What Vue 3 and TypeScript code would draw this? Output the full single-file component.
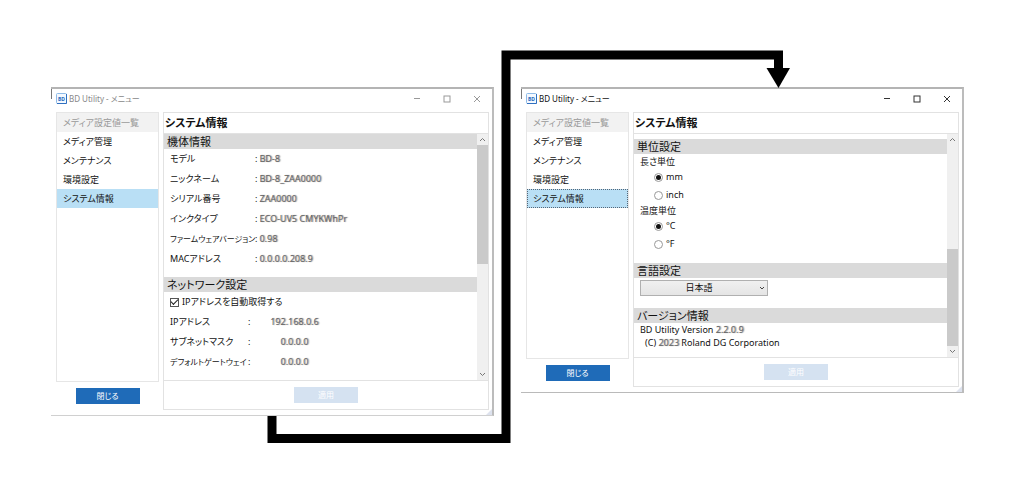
<script setup lang="ts">
import { ref } from 'vue'

interface Row {
  label: string
  value: string
}

interface Panel {
  id: string
  active: boolean
  track: { before: number; thumb: number; after: number }
}

const menu: string[] = ['メディア設定値一覧', 'メディア管理', 'メンテナンス', '環境設定', 'システム情報']

const panels: Panel[] = [
  { id: 'device', active: false, track: { before: 0, thumb: 120, after: 106 } },
  { id: 'units', active: true, track: { before: 106, thumb: 98, after: 0 } },
]

const device: Row[] = [
  { label: 'モデル', value: 'BD-8' },
  { label: 'ニックネーム', value: 'BD-8_ZAA0000' },
  { label: 'シリアル番号', value: 'ZAA0000' },
  { label: 'インクタイプ', value: 'ECO-UV5 CMYKWhPr' },
  { label: 'ファームウェアバージョン', value: '0.98' },
  { label: 'MACアドレス', value: '0.0.0.0.208.9' },
]

const network: Row[] = [
  { label: 'IPアドレス', value: '192.168.0.6' },
  { label: 'サブネットマスク', value: '0.0.0.0' },
  { label: 'デフォルトゲートウェイ', value: '0.0.0.0' },
]

const isLong = (text: string): boolean => text.length > 10

const autoIp = ref(true)
const lengthUnit = ref('mm')
const tempUnit = ref('°C')
const language = ref('ja')
</script>

<template>
  <main class="canvas">
    <section v-for="p in panels" :key="p.id" class="window" :class="{ inactive: !p.active }">
      <header class="titlebar">
        <svg class="logo" viewBox="0 0 11 11" aria-hidden="true">
          <rect x="0.5" y="0.5" width="10" height="10" rx="1" fill="#f4f9ff" stroke="#8dbbe8" />
          <path d="M10.5 1v9.5H1" fill="none" stroke="#2f6fc0" />
          <text x="5.5" y="7.500" text-anchor="middle">BD</text>
        </svg>
        <span class="title">BD Utility - メニュー</span>
        <div class="controls">
          <button type="button" aria-label="最小化">
            <svg viewBox="0 0 8 8"><path d="M1 3.500h6" /></svg>
          </button>
          <button type="button" aria-label="最大化">
            <svg viewBox="0 0 8 8"><rect x="1" y="1" width="6" height="6" /></svg>
          </button>
          <button type="button" aria-label="ウィンドウを閉じる">
            <svg viewBox="0 0 8 8"><path d="M1 1l6 6M7 1l-6 6" /></svg>
          </button>
        </div>
      </header>

      <div class="content">
        <div class="side">
          <nav class="menu">
            <button
              v-for="(item, i) in menu"
              :key="item"
              type="button"
              class="item"
              :disabled="i === 0"
              :class="{ selected: i === 4, focused: i === 4 && p.active }"
            >{{ item }}</button>
          </nav>
          <div class="actions"><button type="button" class="primary">閉じる</button></div>
        </div>

        <div class="main">
          <h1>システム情報</h1>
          <div class="scroller">
            <div v-if="p.id === 'device'" class="page">
              <h2>機体情報</h2>
              <dl class="rows">
                <div v-for="r in device" :key="r.label" class="row">
                  <dt :class="{ long: isLong(r.label) }">{{ r.label }}</dt>
                  <dd>:<span class="masked">{{ r.value }}</span></dd>
                </div>
              </dl>
              <h2>ネットワーク設定</h2>
              <label class="check"><input v-model="autoIp" type="checkbox" />IPアドレスを自動取得する</label>
              <dl class="rows net">
                <div v-for="r in network" :key="r.label" class="row">
                  <dt :class="{ long: isLong(r.label) }">{{ r.label }}</dt>
                  <dd>:<span class="masked">{{ r.value }}</span></dd>
                </div>
              </dl>
            </div>

            <div v-else class="page units">
              <h2>単位設定</h2>
              <fieldset class="first">
                <legend>長さ単位</legend>
                <label v-for="u in ['mm', 'inch']" :key="u" class="radio">
                  <input v-model="lengthUnit" type="radio" name="length" :value="u" />{{ u }}
                </label>
              </fieldset>
              <fieldset>
                <legend>温度単位</legend>
                <label v-for="u in ['°C', '°F']" :key="u" class="radio">
                  <input v-model="tempUnit" type="radio" name="temp" :value="u" />{{ u }}
                </label>
              </fieldset>
              <h2 class="spaced">言語設定</h2>
              <div class="language">
                <select v-model="language" aria-label="言語設定">
                  <option value="ja">日本語</option>
                  <option value="en">English</option>
                </select>
                <svg viewBox="0 0 6 6" aria-hidden="true"><path d="M1 2l2 2 2-2" /></svg>
              </div>
              <h2>バージョン情報</h2>
              <div class="version">
                <p>BD Utility Version <span class="masked">2.2.0.9</span></p>
                <p class="copyright">(C) <span class="masked">2023</span> Roland DG Corporation</p>
              </div>
            </div>

            <div class="scrollbar">
              <button type="button" aria-label="上へ"><svg viewBox="0 0 7 7"><path d="M1 5l2.500-2.500L6 5" /></svg></button>
              <div class="track">
                <span :style="{ flexGrow: p.track.before }"></span>
                <span class="thumb" :style="{ flexGrow: p.track.thumb }"></span>
                <span :style="{ flexGrow: p.track.after }"></span>
              </div>
              <button type="button" aria-label="下へ"><svg viewBox="0 0 7 7"><path d="M1 2l2.500 2.500L6 2" /></svg></button>
            </div>
          </div>
          <div class="actions"><button type="button" class="primary" disabled>適用</button></div>
        </div>
      </div>
      <svg class="grip" viewBox="0 0 7 7" aria-hidden="true"><path d="M7 0v7H0z" /></svg>
    </section>

    <svg class="arrow" viewBox="0 0 1015 494" aria-hidden="true">
      <path d="M272 416V438.500H506V55H778.500V70" fill="none" stroke="#000" stroke-width="9" />
      <path d="M766.500 68H790L778.500 88z" />
    </svg>
  </main>
</template>

<style>
body {
  margin: 0;
  background: #fff;
}
</style>

<style scoped>
* {
  box-sizing: border-box;
}
.canvas {
  position: relative;
  display: grid;
  grid-template-columns: 1fr 1fr;
  align-items: start;
  gap: 27px;
  padding: 87px 51px 79px;
  font: 9px/20px "Noto Sans", "Noto Sans CJK JP", sans-serif;
  font-feature-settings: "palt";
  color: #111;
}
.arrow {
  position: absolute;
  top: 0;
  left: 0;
  width: 100%;
  pointer-events: none;
}
button,
select,
input {
  font: inherit;
  font-feature-settings: inherit;
  color: inherit;
  margin: 0;
  padding: 0;
}
h1,
h2,
p,
dl,
dd {
  margin: 0;
}
.window {
  position: relative;
  min-width: 0;
  background: #fff;
  border-top: 2px solid #b4b4b4;
  border-right: 2px solid #bcbcbc;
  border-bottom: 1px solid #bababa;
}
.window.inactive {
  border-bottom-color: #d0d0d0;
}
.window::before {
  content: "";
  position: absolute;
  left: 0;
  top: 0;
  width: 1px;
  height: 10px;
  background: #777;
}
.titlebar {
  display: flex;
  align-items: center;
  height: 19px;
  padding: 0 0 0 5px;
  font-size: 8px;
  line-height: 16px;
}
.inactive .titlebar {
  color: #888;
}
.logo {
  width: 11px;
  height: 11px;
  margin-right: 2px;
}
.logo text {
  font-size: 5px;
  font-weight: 700;
  fill: #2468bd;
}
.controls {
  display: flex;
  margin-left: auto;
}
.controls button {
  width: 30px;
  height: 16px;
  display: grid;
  place-items: center;
  border: 0;
  background: none;
}
.controls svg {
  width: 8px;
  height: 8px;
  fill: none;
  stroke: #333;
}
.inactive .controls svg {
  stroke: #999;
}
.content {
  display: flex;
  gap: 4px;
  padding: 4px 3px 5px 5px;
}
.side {
  display: flex;
  flex-direction: column;
  width: 103px;
}
.menu {
  display: flex;
  flex-direction: column;
  flex: 1;
  border: 1px solid #e6e6e6;
}
.item {
  height: 19px;
  padding: 0 6px;
  border: 0;
  background: none;
  text-align: left;
  line-height: 18px;
}
.item:disabled {
  background: #f2f2f2;
  color: #999;
}
.item.selected {
  background: #b9dff5;
}
.item.focused {
  outline: 1px dotted #567;
  outline-offset: -1px;
}
.actions {
  display: flex;
  align-items: center;
  justify-content: center;
  height: 28px;
}
.primary {
  width: 64px;
  height: 16px;
  border: 0;
  background: #1f6bb8;
  color: #fff;
  line-height: 16px;
  font-size: 8px;
}
.primary:disabled {
  background: #d5e2f1;
}
.main {
  flex: 1;
  min-width: 0;
  border: 1px solid #e2e2e2;
}
h1 {
  height: 20px;
  padding-left: 1px;
  font-size: 11px;
  font-weight: 700;
  line-height: 20px;
}
.scroller {
  display: flex;
  border-top: 1px solid #e2e2e2;
  border-bottom: 1px solid #e2e2e2;
}
.page {
  flex: 1;
  min-width: 0;
  padding-bottom: 8px;
}
.page.units {
  padding: 5px 0 8px;
}
h2 {
  height: 15px;
  padding-left: 3px;
  background: #dadada;
  font-size: 11px;
  font-weight: 400;
  line-height: 15px;
}
.rows {
  padding-bottom: 8px;
}
.rows.net {
  padding-bottom: 0;
}
.row {
  display: flex;
  height: 20px;
  padding-left: 6px;
}
dt {
  width: 85px;
  white-space: nowrap;
}
dt.long {
  font-size: 8px;
}
.net dt {
  width: 78px;
}
.net dd {
  display: flex;
}
.net .masked {
  width: 84px;
  text-align: center;
}
.masked {
  margin-left: 2px;
  color: #666;
  text-shadow: 1px 0 1px #888;
}
.check {
  display: flex;
  align-items: center;
  height: 20px;
  padding-left: 6px;
}
input {
  appearance: none;
  display: grid;
  place-items: center;
  background: #fff;
}
.check input {
  width: 9px;
  height: 9px;
  margin-right: 3px;
  border: 1px solid #555;
}
.check input:checked::before {
  content: "";
  width: 6px;
  height: 3px;
  margin-bottom: 2px;
  border: solid #222;
  border-width: 0 0 1px 1px;
  rotate: -45deg;
}
fieldset {
  margin: 0;
  padding: 0 0 0 20px;
  border: 0;
}
.first {
  margin-top: 1px;
}
legend {
  height: 13px;
  margin-left: -14px;
  padding: 0;
  line-height: 13px;
}
.radio {
  display: flex;
  align-items: center;
  height: 18px;
  line-height: 18px;
}
.radio input {
  width: 9px;
  height: 9px;
  margin-right: 3px;
  border: 1px solid #999;
  border-radius: 50%;
}
.radio input:checked::before {
  content: "";
  width: 5px;
  height: 5px;
  border-radius: 50%;
  background: #111;
}
.spaced {
  margin-top: 10px;
}
.language {
  position: relative;
  width: 128px;
  margin: 2px 6px 12px;
}
.language select {
  display: block;
  appearance: none;
  width: 100%;
  height: 16px;
  padding-right: 10px;
  border: 1px solid #b0b0b0;
  border-radius: 0;
  background: linear-gradient(#f0f0f0, #e5e5e5);
  text-align: center;
  text-align-last: center;
  line-height: 14px;
}
.language svg {
  position: absolute;
  top: 5px;
  right: 3px;
  width: 6px;
  height: 6px;
  fill: none;
  stroke: #444;
}
.version {
  padding-left: 6px;
  line-height: 13px;
}
.copyright {
  padding-left: 5px;
}
.version .masked {
  margin-left: 0;
}
.scrollbar {
  display: flex;
  flex-direction: column;
  width: 11px;
  background: #f0f0f0;
}
.scrollbar button {
  display: grid;
  place-items: center;
  height: 11px;
  border: 0;
  background: none;
}
.scrollbar svg {
  width: 7px;
  height: 7px;
  fill: none;
  stroke: #777;
}
.track {
  display: flex;
  flex-direction: column;
  flex: 1;
}
.thumb {
  background: #cacaca;
}
.grip {
  position: absolute;
  right: 0;
  bottom: 0;
  width: 6px;
  height: 6px;
  fill: #dde2ee;
}
</style>
